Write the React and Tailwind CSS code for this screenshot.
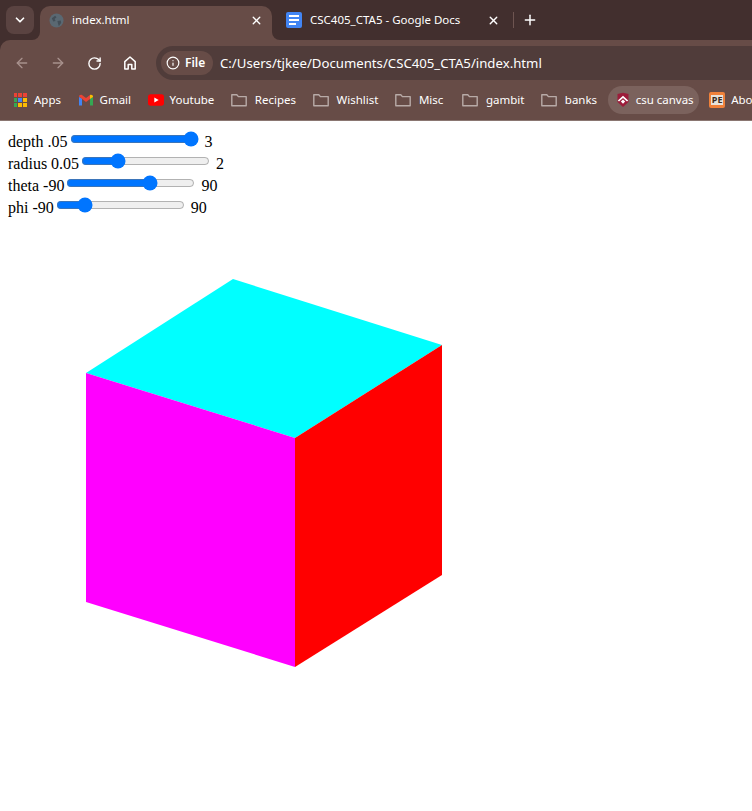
import { ArrowLeft, ArrowRight, ChevronDown, Info, Plus, RotateCw, X } from 'lucide-react';

const bookmarkFolders = ['Recipes', 'Wishlist', 'Misc', 'gambit', 'banks'];

const sliders = [
  { label: 'depth .05', end: '3', min: 0.05, max: 3, step: 0.05, value: 3 },
  { label: 'radius 0.05', end: '2', min: 0.05, max: 2, step: 0.05, value: 0.55 },
  { label: 'theta -90', end: '90', min: -90, max: 90, step: 1, value: 30 },
  { label: 'phi -90', end: '90', min: -90, max: 90, step: 1, value: -56 },
];

function Folder() {
  return (
    <svg width="16" height="16" viewBox="0 0 16 16" fill="none" stroke="#b8aaa7" strokeWidth="1.4" className="shrink-0">
      <path d="M0.8 2.8h5l1.6 1.8h7.800v9.200H0.800z" strokeLinejoin="round" />
    </svg>
  );
}

function AppsIcon() {
  const colors = ['#ea4335', '#ea4335', '#ea4335', '#34a853', '#4285f4', '#fbbc04', '#34a853', '#fbbc04', '#fbbc04'];
  return (
    <div className="flex h-4 w-4 shrink-0 items-center justify-center">
      <div className="grid h-[14px] w-[13px] grid-cols-3 gap-[1px]">
        {colors.map((color, i) => (
          <span key={i} className="block" style={{ background: color }} />
        ))}
      </div>
    </div>
  );
}

function GmailIcon() {
  return (
    <svg width="16" height="16" viewBox="0 0 16 16" className="shrink-0">
      <path d="M1 5v8.500h3V6.500z" fill="#4285f4" />
      <path d="M15 5v8.500h-3V6.500z" fill="#34a853" />
      <path d="M1 4.600 8 10l4-3V3L8 6 4 3C2.800 2.200 1 3 1 4.600z" fill="#ea4335" />
      <path d="M12 3c1.200-.8 3-.1 3 1.600V5l-3 2z" fill="#fbbc04" />
    </svg>
  );
}

function YoutubeIcon() {
  return (
    <svg width="16" height="12" viewBox="0 0 16 12" className="shrink-0">
      <rect width="16" height="11.500" y="0.200" rx="2.600" fill="#f00" />
      <path d="M6.300 3.400v5l4.400-2.500z" fill="#fff" />
    </svg>
  );
}

function CanvasIcon() {
  return (
    <svg width="16" height="16" viewBox="0 0 16 16" className="shrink-0">
      <path d="M2.500 2 8 0.800 13.500 2v8L8 15l-5.500-5z" fill="#9c1c3a" />
      <path d="M8 3.800 2.800 8.400 4 9.600 8 6l4 3.600 1.200-1.200z" fill="#fff" />
      <path d="M8 7.600 5.800 9.600 8 11.800l2.200-2.200z" fill="#fff" />
    </svg>
  );
}

function PeIcon() {
  return (
    <div className="flex h-4 w-4 shrink-0 items-center justify-center rounded-[2px] bg-[#f0813a]">
      <span className="bg-[#e8e2da] px-[1px] text-[9px] font-bold leading-[10px] text-[#3a2a20]">PE</span>
    </div>
  );
}

function HomeIcon() {
  return (
    <svg width="16" height="16" viewBox="0 0 16 16" fill="none" stroke="#fff" strokeWidth="1.5" className="shrink-0">
      <path d="M2.800 14V6.600L8 2l5.200 4.600V14H9.800V9.600H6.200V14z" strokeLinejoin="round" />
    </svg>
  );
}

function DocsIcon() {
  return (
    <div className="flex h-4 w-4 shrink-0 flex-col justify-center gap-[2px] rounded-[2px] bg-[#4285f4] px-[3px]">
      <span className="h-[2px] w-full bg-white" />
      <span className="h-[2px] w-full bg-white" />
      <span className="h-[2px] w-2/3 bg-white" />
    </div>
  );
}

function GlobeIcon() {
  return (
    <svg width="15" height="15" viewBox="0 0 16 16" className="shrink-0">
      <circle cx="8" cy="8" r="7.500" fill="#5a6872" />
      <path d="M3 5.500 6.500 3 8 4.500 6 6.500 7 8.500 4.500 9zM9 8.500l3.500-.5.500 2.500L10.500 14 9.500 11z" fill="#434e57" />
    </svg>
  );
}

function Bookmark({ icon, label, className = 'gap-[6px]' }) {
  return (
    <div className={`flex h-[28px] shrink-0 items-center rounded-full px-[7px] ${className}`}>
      {icon}
      <span className="whitespace-nowrap text-[11.5px] text-white">{label}</span>
    </div>
  );
}

function BrowserChrome() {
  return (
    <div className="bg-[#422f2e] font-['Noto_Sans',sans-serif] text-white">
      <div className="flex h-[40px] items-end pl-[6px]">
        <div className="mb-[6px] flex h-[28px] w-[28px] shrink-0 items-center justify-center rounded-[8px] bg-[#5a4341]">
          <ChevronDown size={14} strokeWidth={3} />
        </div>
        <div className="relative ml-[6px] flex h-[34px] w-[232px] shrink-0 items-center rounded-t-[10px] bg-[#674c47] pb-[6px] pl-[9px] pr-[9px]">
          <div className="absolute bottom-0 left-[-8px] h-2 w-2 bg-[#674c47]">
            <div className="h-full w-full rounded-br-[8px] bg-[#422f2e]" />
          </div>
          <GlobeIcon />
          <span className="ml-[8px] flex-1 text-[11.5px]">index.html</span>
          <X size={13} strokeWidth={2.5} />
          <div className="absolute bottom-0 right-[-8px] h-2 w-2 bg-[#674c47]">
            <div className="h-full w-full rounded-bl-[8px] bg-[#422f2e]" />
          </div>
        </div>
        <div className="ml-[14px] flex h-[34px] w-[214px] shrink-0 items-center pb-[6px]">
          <DocsIcon />
          <span className="ml-[8px] flex-1 whitespace-nowrap text-[11.5px]">CSC405_CTA5 - Google Docs</span>
          <X size={13} strokeWidth={2.5} />
        </div>
        <div className="mb-[12px] ml-[13px] h-[16px] w-[1px] shrink-0 bg-[#6e5551]" />
        <Plus size={16} strokeWidth={2.2} className="mb-[12px] ml-[8px] shrink-0" />
      </div>
      <div className="flex h-[40px] items-start rounded-tl-[10px] bg-[#674c47] pt-[6px]">
        <div className="flex h-[34px] shrink-0 items-center pl-[14px]">
          <ArrowLeft size={16} strokeWidth={2} className="text-[#a8918d]" />
          <ArrowRight size={16} strokeWidth={2} className="ml-[20px] text-[#a8918d]" />
          <RotateCw size={15} strokeWidth={2.2} className="ml-[21px]" />
          <div className="ml-[20px]">
            <HomeIcon />
          </div>
        </div>
        <div className="ml-[18px] flex h-[34px] flex-1 items-center rounded-l-full bg-[#503c3a] pl-[5px]">
          <div className="flex h-[24px] w-[52px] items-center gap-[5px] rounded-full bg-[#674c47] pl-[5px]">
            <Info size={14} strokeWidth={2} />
            <span className="text-[12px] font-semibold">File</span>
          </div>
          <span className="ml-[7px] whitespace-nowrap pt-[1px] text-[13.2px]">C:/Users/tjkee/Documents/CSC405_CTA5/index.html</span>
        </div>
      </div>
      <div className="flex h-[41px] items-center gap-[2.5px] overflow-hidden border-b border-[#8a7671] bg-[#674c47] pl-[5px]">
        <Bookmark icon={<AppsIcon />} label="Apps" />
        <Bookmark icon={<GmailIcon />} label="Gmail" />
        <Bookmark icon={<YoutubeIcon />} label="Youtube" />
        {bookmarkFolders.map((name) => (
          <Bookmark key={name} icon={<Folder />} label={name} className={name === 'Misc' ? 'mr-[2px] gap-2' : 'gap-2'} />
        ))}
        <Bookmark icon={<CanvasIcon />} label="csu canvas" className="ml-[1px] mr-[1px] w-[91px] gap-[5px] bg-[#7b625d]" />
        <Bookmark icon={<PeIcon />} label="About" />
      </div>
    </div>
  );
}

function Cube() {
  return (
    <svg width="752" height="594" viewBox="0 217 752 594" className="block">
      <polygon points="233,279 442,345 295,438 86,373" fill="#00ffff" />
      <polygon points="86,373 295,438 295,667 86,602" fill="#ff00ff" />
      <polygon points="295,438 442,345 442,575 295,667" fill="#ff0000" />
    </svg>
  );
}

export default function App() {
  return (
    <div className="h-[811px] w-[752px] overflow-hidden bg-white">
      <BrowserChrome />
      <div className="px-2 pt-[8px] font-['Liberation_Serif',serif] text-[16px] leading-[22px] text-black">
        {sliders.map((s) => (
          <div key={s.label} className="h-[22px] whitespace-nowrap">
            {s.label}
            <input type="range" min={s.min} max={s.max} step={s.step} defaultValue={s.value} className="m-[2px]" />{' '}
            {s.end}
          </div>
        ))}
      </div>
      <Cube />
    </div>
  );
}
